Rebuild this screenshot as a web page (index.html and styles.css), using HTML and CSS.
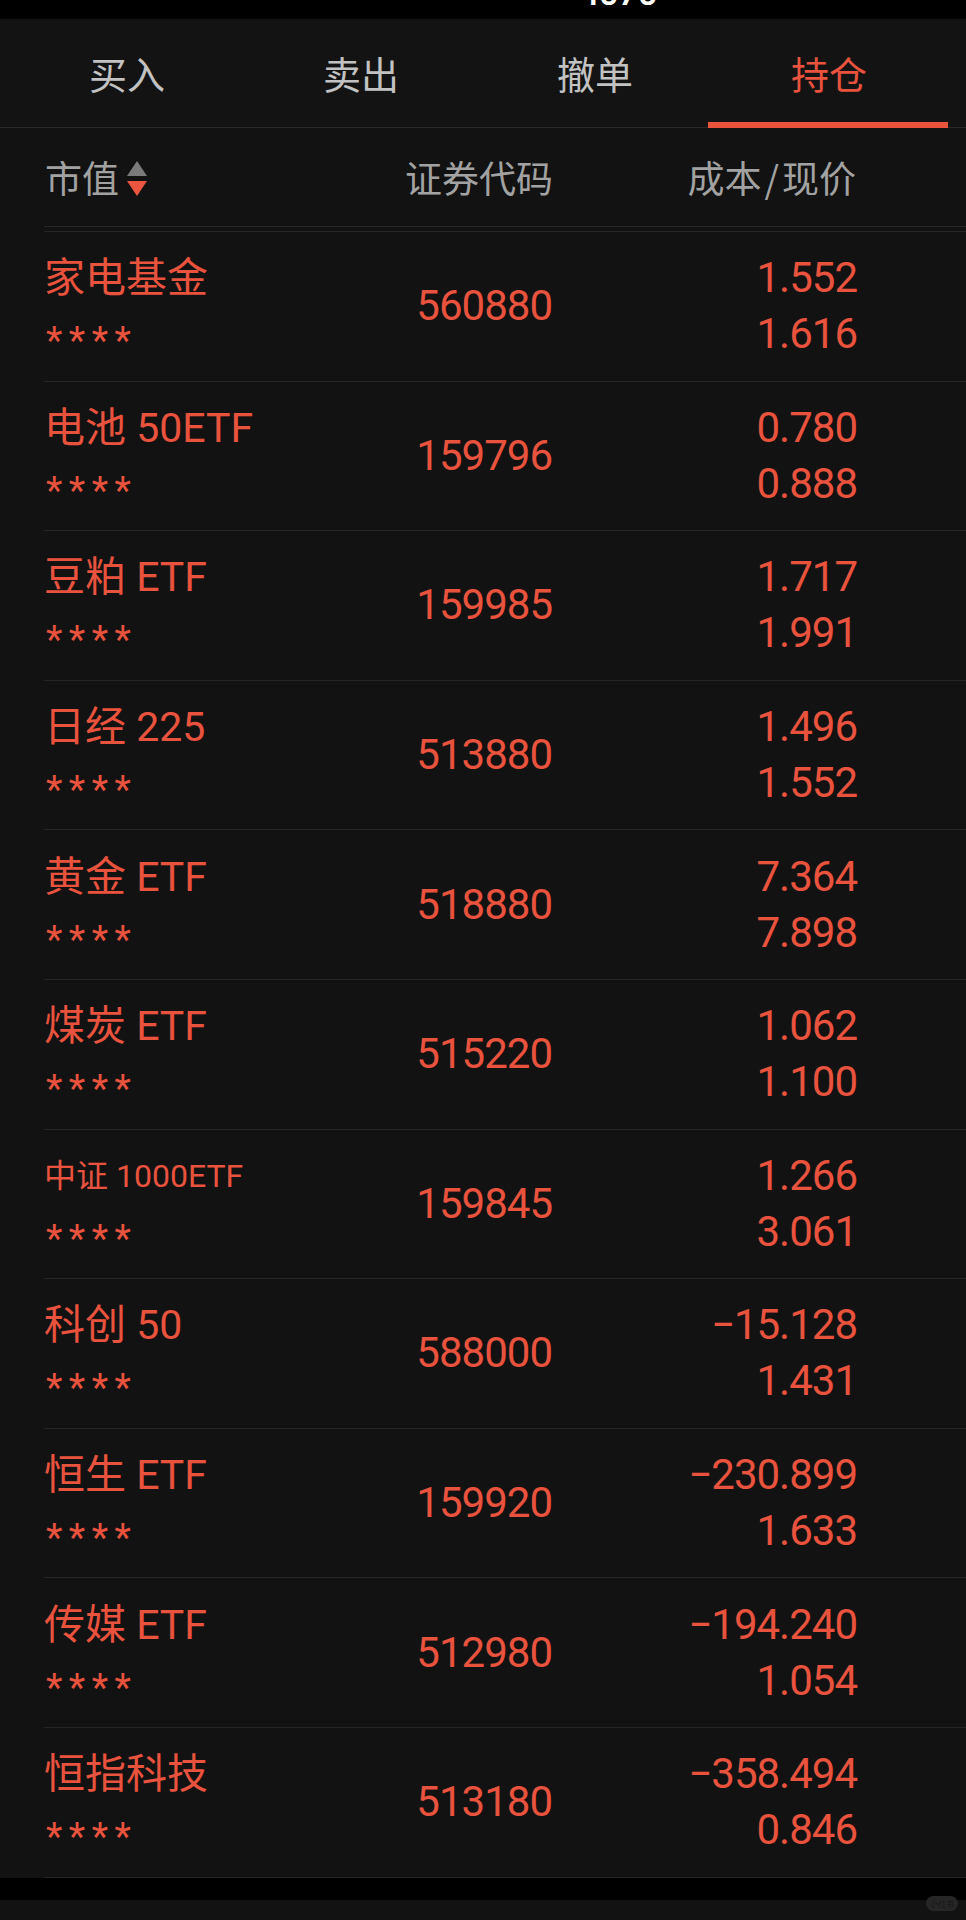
FILE: index.html
```html
<!DOCTYPE html>
<html lang="zh-CN">

<head>
  <meta charset="UTF-8">
  <meta name="viewport" content="width=device-width, initial-scale=1.0">
  <title>持仓</title>
  <link rel="stylesheet" href="styles.css">
</head>

<body>
<div class="status_bar"><span class="status_text">4070</span></div>

<div class="tab_bar">
  <div class="tab_item">买入</div>
  <div class="tab_item">卖出</div>
  <div class="tab_item">撤单</div>
  <div class="tab_item tab_active">持仓</div>
</div>

<div class="hold_head">
  <div class="hold_head_name">市值
    <span class="sort_icon">
      <svg width="20" height="35" viewBox="0 0 20 35">
        <polygon points="10,0 20,15 0,15" fill="#7a7a7a"></polygon>
        <polygon points="0,20 20,20 10,35" fill="#ec5540"></polygon>
      </svg>
    </span>
  </div>
  <div class="hold_head_code">证券代码</div>
  <div class="hold_head_price">成本<i>/</i>现价</div>
</div>

<div class="hold_list">
  <div class="hold_row">
    <div class="hold_name"><p>家电基金</p><p class="stars">****</p></div>
    <div class="hold_code">560880</div>
    <div class="hold_price"><p>1.552</p><p>1.616</p></div>
  </div>
  <div class="hold_row">
    <div class="hold_name"><p>电池 50ETF</p><p class="stars">****</p></div>
    <div class="hold_code">159796</div>
    <div class="hold_price"><p>0.780</p><p>0.888</p></div>
  </div>
  <div class="hold_row">
    <div class="hold_name"><p>豆粕 ETF</p><p class="stars">****</p></div>
    <div class="hold_code">159985</div>
    <div class="hold_price"><p>1.717</p><p>1.991</p></div>
  </div>
  <div class="hold_row">
    <div class="hold_name"><p>日经 225</p><p class="stars">****</p></div>
    <div class="hold_code">513880</div>
    <div class="hold_price"><p>1.496</p><p>1.552</p></div>
  </div>
  <div class="hold_row">
    <div class="hold_name"><p>黄金 ETF</p><p class="stars">****</p></div>
    <div class="hold_code">518880</div>
    <div class="hold_price"><p>7.364</p><p>7.898</p></div>
  </div>
  <div class="hold_row">
    <div class="hold_name"><p>煤炭 ETF</p><p class="stars">****</p></div>
    <div class="hold_code">515220</div>
    <div class="hold_price"><p>1.062</p><p>1.100</p></div>
  </div>
  <div class="hold_row">
    <div class="hold_name"><p class="name_small">中证 1000ETF</p><p class="stars">****</p></div>
    <div class="hold_code">159845</div>
    <div class="hold_price"><p>1.266</p><p>3.061</p></div>
  </div>
  <div class="hold_row">
    <div class="hold_name"><p>科创 50</p><p class="stars">****</p></div>
    <div class="hold_code">588000</div>
    <div class="hold_price"><p>−15.128</p><p>1.431</p></div>
  </div>
  <div class="hold_row">
    <div class="hold_name"><p>恒生 ETF</p><p class="stars">****</p></div>
    <div class="hold_code">159920</div>
    <div class="hold_price"><p>−230.899</p><p>1.633</p></div>
  </div>
  <div class="hold_row">
    <div class="hold_name"><p>传媒 ETF</p><p class="stars">****</p></div>
    <div class="hold_code">512980</div>
    <div class="hold_price"><p>−194.240</p><p>1.054</p></div>
  </div>
  <div class="hold_row">
    <div class="hold_name"><p>恒指科技</p><p class="stars">****</p></div>
    <div class="hold_code">513180</div>
    <div class="hold_price"><p>−358.494</p><p>0.846</p></div>
  </div>
</div>

<div class="home_bar"></div>
<div class="foot_bar"><span class="mark">小红书</span></div>
</body>

</html>
```

FILE: styles.css
```css
body,
p {
  padding: 0;
  margin: 0;
}

body {
  background: #121212;
  font-family: Roboto, 'Noto Sans CJK SC', sans-serif;
  color: #e9533e;
  width: 966px;
  overflow: hidden;
}

.status_bar {
  height: 19px;
  background: #000;
  overflow: hidden;
  padding-left: 579px;
}

.status_text {
  display: block;
  margin-top: -25px;
  font-size: 36px;
  line-height: 36px;
  font-weight: 500;
  color: #fff;
  letter-spacing: -1px;
}

.tab_bar {
  display: flex;
  height: 108px;
  padding: 0 20px 0 10px;
  border-bottom: 1px solid #2a2a2a;
  background: #131313;
}

.tab_item {
  flex: 1;
  position: relative;
  text-align: center;
  font-size: 38px;
  line-height: 108px;
  color: #c2c2c2;
  font-family: 'Noto Sans CJK SC', sans-serif;
}

.tab_active {
  color: #e9533e;
}

.tab_active::after {
  content: '';
  position: absolute;
  left: -4px;
  right: -2px;
  bottom: -1px;
  height: 6px;
  background: #e9533e;
}

.hold_head {
  display: grid;
  grid-template-columns: minmax(0, 1fr) 300px 305px;
  align-items: center;
  height: 98px;
  margin-left: 44px;
  padding-right: 108px;
  border-bottom: 1px solid #262626;
  font-family: 'Noto Sans CJK SC', sans-serif;
  font-size: 37px;
  color: #a2a2a2;
}

.hold_head_name {
  display: flex;
  align-items: center;
  padding-left: 1px;
}

.sort_icon {
  display: flex;
  margin-left: 8px;
  margin-top: 2px;
}

.hold_head_code,
.hold_head_price {
  text-align: right;
}

.hold_head_price {
  padding-right: 2px;
}

.hold_head_price i {
  font-style: normal;
  margin: 0 3px;
}

.hold_list {
  margin-top: 4px;
  margin-left: 44px;
  border-top: 1px solid #262626;
}

.hold_row {
  display: grid;
  grid-template-columns: minmax(0, 1fr) 300px 305px;
  align-items: center;
  height: 148.6px;
  padding-right: 108px;
  border-bottom: 1px solid #262626;
}

.hold_name {
  white-space: nowrap;
  font-size: 41px;
  line-height: 56px;
}

.hold_name .name_small {
  font-size: 32px;
}

.stars {
  height: 56px;
  font-size: 38px;
  line-height: 70px;
  letter-spacing: 6.5px;
  padding-left: 2px;
}

.hold_code {
  text-align: right;
  font-size: 42px;
  letter-spacing: -1px;
  line-height: 56px;
  padding-right: 1px;
}

.hold_price {
  text-align: right;
  font-size: 42px;
  letter-spacing: -1px;
  line-height: 56px;
  padding-right: 1px;
}

.home_bar {
  height: 22px;
  background: #000;
}

.foot_bar {
  display: flex;
  justify-content: flex-end;
  height: 20px;
  padding-right: 8px;
}

.mark {
  margin-top: -4px;
  width: 32px;
  height: 15px;
  border-radius: 8px;
  background: #262626;
  color: #161616;
  font-family: 'Noto Sans CJK SC', sans-serif;
  font-size: 8px;
  line-height: 15px;
  text-align: center;
}
```
